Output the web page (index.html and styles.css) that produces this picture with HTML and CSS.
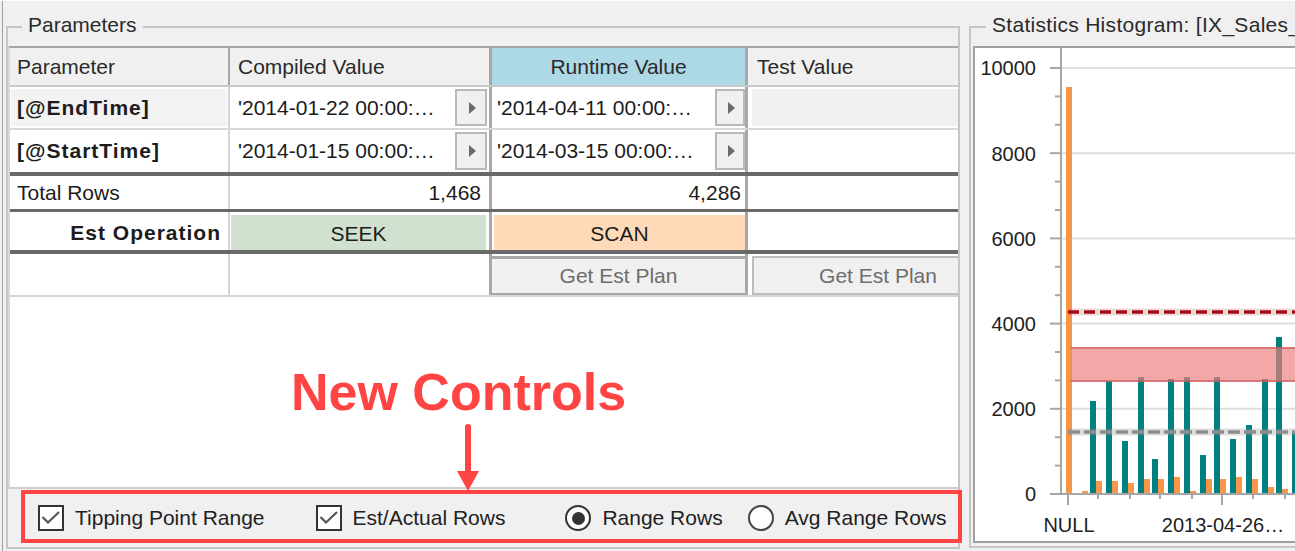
FILE: index.html
```html
<!DOCTYPE html>
<html lang="en">
<head>
<meta charset="utf-8">
<title>Parameters</title>
<link rel="stylesheet" href="styles.css">
</head>
<body>
<div class="page">
  <div class="left-pane">
    <section class="groupbox params">
      <div class="legend">Parameters</div>
      <div class="grid">
        <div class="row head">
          <div class="c c1">Parameter</div>
          <div class="c c2">Compiled Value</div>
          <div class="c c3">Runtime Value</div>
          <div class="c c4">Test Value</div>
        </div>
        <div class="row r1">
          <div class="c c1 bold cur">[@EndTime]</div>
          <div class="c c2"><span class="val">'2014-01-22 00:00:…</span><span class="ebtn"><i class="tri"></i></span></div>
          <div class="c c3"><span class="val">'2014-04-11 00:00:…</span><span class="ebtn eb3"><i class="tri"></i></span></div>
          <div class="c c4 ro"></div>
        </div>
        <div class="row r2">
          <div class="c c1 bold">[@StartTime]</div>
          <div class="c c2"><span class="val">'2014-01-15 00:00:…</span><span class="ebtn"><i class="tri"></i></span></div>
          <div class="c c3"><span class="val">'2014-03-15 00:00:…</span><span class="ebtn eb3"><i class="tri"></i></span></div>
          <div class="c c4"></div>
        </div>
        <div class="row tot">
          <div class="c c1">Total Rows</div>
          <div class="c c2 num">1,468</div>
          <div class="c c3 num">4,286</div>
          <div class="c c4"></div>
        </div>
        <div class="row est">
          <div class="c c1 bold">Est Operation</div>
          <div class="c c2 seek"><span class="op">SEEK</span></div>
          <div class="c c3 scan"><span class="op">SCAN</span></div>
          <div class="c c4"></div>
        </div>
        <div class="row plan">
          <div class="c c1"></div>
          <div class="c c2"></div>
          <div class="c c3"><span class="btn btn3">Get Est Plan</span></div>
          <div class="c c4"><span class="btn btn4">Get Est Plan</span></div>
        </div>
      </div>
      <div class="controls">
        <label class="opt o1"><span class="cb"><svg width="22" height="22" viewBox="0 0 22 22"><polyline points="2.5,10 8,15.5 19,5" fill="none" stroke="#555" stroke-width="2.2"/></svg></span>Tipping Point Range</label>
        <label class="opt o2"><span class="cb"><svg width="22" height="22" viewBox="0 0 22 22"><polyline points="2.5,10 8,15.5 19,5" fill="none" stroke="#555" stroke-width="2.2"/></svg></span>Est/Actual Rows</label>
        <label class="opt o3"><span class="rb on"></span>Range Rows</label>
        <label class="opt o4"><span class="rb"></span>Avg Range Rows</label>
      </div>
    </section>
  </div>

  <div class="right-pane">
    <section class="groupbox hist">
      <div class="legend">Statistics Histogram: [IX_Sales_</div>
      <div class="chart">
        <svg class="plot" width="330" height="493" viewBox="975 48 330 493" xmlns="http://www.w3.org/2000/svg">
          <g stroke="#dedede" stroke-width="2">
            <line x1="1062" y1="68" x2="1305" y2="68"/>
            <line x1="1062" y1="153.2" x2="1305" y2="153.2"/>
            <line x1="1062" y1="238.4" x2="1305" y2="238.4"/>
            <line x1="1062" y1="323.6" x2="1305" y2="323.6"/>
            <line x1="1062" y1="408.8" x2="1305" y2="408.8"/>
          </g>
          <g font-family="Liberation Sans, Arial, sans-serif" font-size="20" fill="#222" text-anchor="end">
            <text x="1036" y="75.3">10000</text>
            <text x="1036" y="160.5">8000</text>
            <text x="1036" y="245.7">6000</text>
            <text x="1036" y="330.9">4000</text>
            <text x="1036" y="416.1">2000</text>
            <text x="1036" y="501.3">0</text>
          </g>
          <g font-family="Liberation Sans, Arial, sans-serif" font-size="20" fill="#222" text-anchor="middle">
            <text x="1069" y="532">NULL</text>
            <text x="1223" y="532">2013-04-26…</text>
          </g>
          <g fill="#f79646">
            <rect x="1066" y="87" width="6" height="406"/>
            <rect x="1082" y="491" width="6" height="2"/>
            <rect x="1096" y="481" width="6" height="12"/>
            <rect x="1112" y="481" width="6" height="12"/>
            <rect x="1128" y="483" width="6" height="10"/>
            <rect x="1144" y="479" width="6" height="14"/>
            <rect x="1158" y="479" width="6" height="14"/>
            <rect x="1174" y="477" width="6" height="16"/>
            <rect x="1190" y="491" width="6" height="2"/>
            <rect x="1206" y="479" width="6" height="14"/>
            <rect x="1220" y="479" width="6" height="14"/>
            <rect x="1236" y="477" width="6" height="16"/>
            <rect x="1252" y="479" width="6" height="14"/>
            <rect x="1268" y="487" width="6" height="6"/>
            <rect x="1282" y="489" width="6" height="4"/>
          </g>
          <g fill="#008080">
            <rect x="1090" y="401" width="6" height="92"/>
            <rect x="1106" y="381" width="6" height="112"/>
            <rect x="1122" y="441" width="6" height="52"/>
            <rect x="1138" y="377" width="6" height="116"/>
            <rect x="1152" y="459" width="6" height="34"/>
            <rect x="1168" y="379" width="6" height="114"/>
            <rect x="1184" y="377" width="6" height="116"/>
            <rect x="1200" y="455" width="6" height="38"/>
            <rect x="1214" y="377" width="6" height="116"/>
            <rect x="1230" y="439" width="6" height="54"/>
            <rect x="1246" y="425" width="6" height="68"/>
            <rect x="1262" y="379" width="6" height="114"/>
            <rect x="1276" y="337" width="6" height="156"/>
            <rect x="1292" y="433" width="6" height="60"/>
          </g>
          <rect x="1071" y="347" width="240" height="35" fill="rgba(237,126,126,0.68)"/>
          <g stroke="rgba(190,80,80,0.55)" stroke-width="2">
            <line x1="1071" y1="348" x2="1311" y2="348"/>
            <line x1="1071" y1="381" x2="1311" y2="381"/>
          </g>
          <line x1="1068" y1="312" x2="1311" y2="312" stroke="rgba(200,110,110,0.28)" stroke-width="7"/>
          <line x1="1068" y1="312" x2="1311" y2="312" stroke="#a30f0f" stroke-width="3.5" stroke-dasharray="11 5"/>
          <line x1="1068" y1="432" x2="1311" y2="432" stroke="rgba(150,150,150,0.3)" stroke-width="7"/>
          <line x1="1068" y1="432" x2="1311" y2="432" stroke="#8e8e8e" stroke-width="3.5" stroke-dasharray="12 4"/>
          <g stroke="#a6a6a6" stroke-width="2">
            <line x1="1061" y1="48" x2="1061" y2="495"/>
            <line x1="1050" y1="494" x2="1311" y2="494"/>
            <line x1="1050" y1="68" x2="1061" y2="68"/>
            <line x1="1050" y1="153.2" x2="1061" y2="153.2"/>
            <line x1="1050" y1="238.4" x2="1061" y2="238.4"/>
            <line x1="1050" y1="323.6" x2="1061" y2="323.6"/>
            <line x1="1050" y1="408.8" x2="1061" y2="408.8"/>
            <line x1="1055" y1="96.4" x2="1061" y2="96.4"/>
            <line x1="1055" y1="124.8" x2="1061" y2="124.8"/>
            <line x1="1055" y1="181.6" x2="1061" y2="181.6"/>
            <line x1="1055" y1="210" x2="1061" y2="210"/>
            <line x1="1055" y1="266.8" x2="1061" y2="266.8"/>
            <line x1="1055" y1="295.2" x2="1061" y2="295.2"/>
            <line x1="1055" y1="352" x2="1061" y2="352"/>
            <line x1="1055" y1="380.4" x2="1061" y2="380.4"/>
            <line x1="1055" y1="437.2" x2="1061" y2="437.2"/>
            <line x1="1055" y1="465.6" x2="1061" y2="465.6"/>
            <line x1="1068" y1="494" x2="1068" y2="505"/>
            <line x1="1222" y1="494" x2="1222" y2="505"/>
            <line x1="1098" y1="494" x2="1098" y2="499"/>
            <line x1="1130" y1="494" x2="1130" y2="499"/>
            <line x1="1160" y1="494" x2="1160" y2="499"/>
            <line x1="1192" y1="494" x2="1192" y2="499"/>
            <line x1="1253" y1="494" x2="1253" y2="499"/>
            <line x1="1285" y1="494" x2="1285" y2="499"/>
          </g>
        </svg>
      </div>
    </section>
  </div>

  <div class="annot-text">New Controls</div>
  <svg class="annot-arrow" width="26" height="72" viewBox="0 0 26 72" xmlns="http://www.w3.org/2000/svg">
    <line x1="13" y1="7" x2="13" y2="54" stroke="#ff4444" stroke-width="6" stroke-linecap="round"/>
    <polygon points="2,51 24,51 13,71" fill="#ff4444"/>
  </svg>
  <div class="annot-box"></div>
</div>
</body>
</html>
```

FILE: styles.css
```css
* { box-sizing: border-box; }
html, body { margin: 0; padding: 0; }
body {
  background: #f0f0f0;
  font-family: "Liberation Sans", Arial, sans-serif;
  font-size: 21px;
  color: #1c1c1c;
  width: 1295px;
  height: 551px;
  overflow: hidden;
}
.page {
  position: relative;
  display: flex;
  width: 1295px;
  height: 551px;
  overflow: hidden;
  padding-left: 2px;
  border-top: 1px solid #fcfcfc;
}
.left-pane {
  flex: none;
  border-left: 1px solid #a0a0a0;
  padding-left: 3px;
}
.right-pane {
  flex: none;
  margin-left: 9px;
}
.groupbox {
  margin-top: 25px;
  border: 2px solid #c6c6c6;
  display: flex;
  flex-direction: column;
}
.params { width: 954px; height: 523px; }
.hist { width: 340px; height: 522px; }
.legend {
  flex: none;
  align-self: flex-start;
  margin: -15px 0 0 14px;
  padding: 0 6px;
  height: 24px;
  line-height: 24px;
  background: #f0f0f0;
  white-space: nowrap;
  color: #2a2a2a;
}
.hist .legend { margin-left: 15px; padding-right: 0; letter-spacing: 0.3px; }

/* grid */
.grid {
  flex: none;
  margin-top: 9px;
  height: 443px;
  background: #fff;
  border-top: 2px solid #a6a6a6;
  border-left: 2px solid #d8d8d8;
  border-bottom: 2px solid #cfcfcf;
  overflow: hidden;
}
.row {
  display: grid;
  grid-template-columns: 220px 259px 259px 258px;
}
.head { height: 39px; background: #f0f0f0; border-bottom: 2px solid #c9c9c9; color: #2a2a2a; }
.r1 { height: 43px; border-bottom: 2px solid #d8d8d8; }
.r2 { height: 46px; border-bottom: 4px solid #696969; }
.tot { height: 36px; border-bottom: 3px solid #696969; }
.est { height: 42px; border-bottom: 4px solid #696969; }
.plan { height: 43px; border-bottom: 2px solid #d5d5d5; }

.c {
  display: flex;
  align-items: center;
  min-width: 0;
  white-space: nowrap;
  overflow: hidden;
}
.c1 { border-right: 2px solid #d4d4d4; padding-left: 7px; }
.head .c1 { border-right-color: #a6a6a6; }
.c2 { padding-left: 8px; }
.c3 { border-left: 3px solid #a8a8a8; border-right: 3px solid #a8a8a8; padding-left: 5px; }
.c4 { padding-left: 9px; }
.head .c3 { background: #add8e6; justify-content: center; padding-left: 0; }

.bold { font-weight: bold; letter-spacing: 1px; }
.cur {
  background: #f2f2f2;
  box-shadow: inset 1px 2px 0 #fff, inset -1px -2px 0 #fff;
}
.ro {
  padding: 2px 0 2px 4px;
  background: #f0f0f0;
  background-clip: content-box;
}
.val { flex: 1; overflow: hidden; }
.ebtn {
  flex: none;
  align-self: stretch;
  width: 32px;
  margin: 2px 2px 2px 0;
  background: #f0f0f0;
  border: 2px solid #b8b8b8;
  display: flex;
  align-items: center;
  justify-content: center;
}
.eb3 { width: 30px; margin-right: 0; }
.tri {
  width: 0;
  height: 0;
  margin-left: 2px;
  border-top: 6px solid transparent;
  border-bottom: 6px solid transparent;
  border-left: 7px solid #6b6b6b;
}
.num { justify-content: flex-end; }
.tot .c2 { padding-right: 8px; }
.tot .c3 { padding-right: 4px; }
.est .c1 { justify-content: flex-end; padding-right: 7px; padding-top: 3px; }
.op { margin-top: 2px; }
.seek {
  justify-content: center;
  padding: 3px 3px 0 1px;
  background: #d0e1d0;
  background-clip: content-box;
}
.scan {
  justify-content: center;
  padding: 3px 0 0 2px;
  background: #ffdab9;
  background-clip: content-box;
}
.plan .c3 { padding: 2px 0 0 0; align-items: stretch; }
.plan .c4 { padding: 2px 2px 0 4px; align-items: stretch; }
.btn {
  flex: 1;
  display: flex;
  align-items: center;
  justify-content: center;
  background: #f0f0f0;
  color: #6d6d6d;
}
.btn3 { border-top: 3px solid #a8a8a8; border-bottom: 2px solid #a8a8a8; }
.btn4 { border: 2px solid #bdbdbd; }

/* controls */
.controls {
  flex: none;
  height: 58px;
  display: flex;
  align-items: center;
  color: #222;
}
.opt { display: flex; align-items: center; gap: 11px; white-space: nowrap; }
.o1 { margin-left: 30px; }
.o2 { margin-left: 51px; }
.o3 { margin-left: 60px; }
.o4 { margin-left: 25px; }
.cb {
  width: 26px;
  height: 26px;
  border: 2px solid #333;
  background: #fff;
  display: flex;
}
.cb svg { display: block; }
.rb {
  width: 26px;
  height: 26px;
  border: 2px solid #444;
  border-radius: 50%;
  background: #fff;
  display: flex;
  align-items: center;
  justify-content: center;
}
.rb.on { border-color: #333; }
.rb.on::after {
  content: "";
  width: 13px;
  height: 13px;
  border-radius: 50%;
  background: #333;
}

/* chart */
.chart {
  flex: none;
  margin: 9px 0 0 2px;
  height: 497px;
  background: #fff;
  border: 2px solid #a0a0a0;
  border-right: 0;
  overflow: hidden;
}
.plot { display: block; }

/* annotations */
.annot-text {
  position: absolute;
  left: 291px;
  top: 365px;
  font-family: "Liberation Sans", Arial, sans-serif;
  font-weight: bold;
  font-size: 52px;
  line-height: 52px;
  color: #ff4444;
  white-space: nowrap;
}
.annot-arrow {
  position: absolute;
  left: 455px;
  top: 419px;
}
.annot-box {
  position: absolute;
  left: 21px;
  top: 489px;
  width: 941px;
  height: 53px;
  border: 4px solid #ff4444;
}
```
